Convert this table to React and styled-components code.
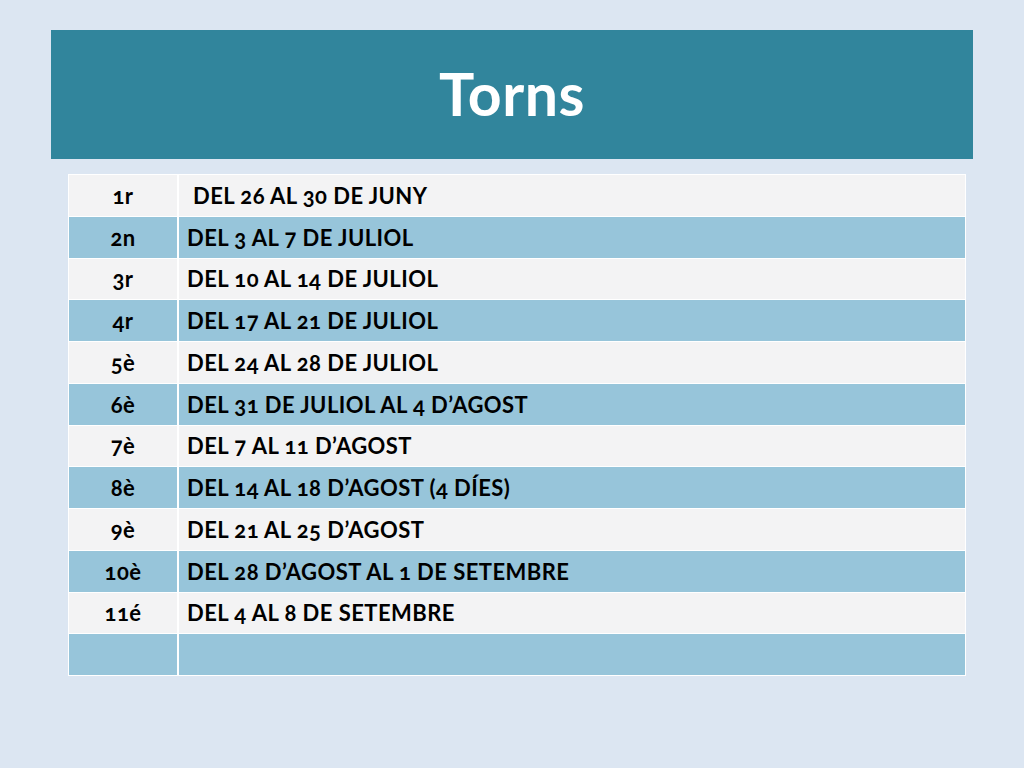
import React from 'react'
import styled, { createGlobalStyle } from 'styled-components'

const GlobalStyle = createGlobalStyle`
  html, body {
    margin: 0;
    padding: 0;
    background: #dce6f2;
  }
`

const Slide = styled.div`
  width: 1024px;
  height: 768px;
  box-sizing: border-box;
  padding: 30px 51px 0 51px;
  display: flex;
  flex-direction: column;
  font-family: Lato, "Open Sans", sans-serif;
`

const Header = styled.header`
  height: 129px;
  background: #31859c;
  display: flex;
  align-items: center;
  justify-content: center;
`

const Title = styled.h1`
  margin: 0;
  padding-bottom: 2px;
  color: #ffffff;
  font-size: 59px;
  font-weight: 700;
  letter-spacing: 0.5px;
`

const Table = styled.div`
  margin: 15px 7px 0 17px;
  display: grid;
  grid-template-columns: 108px 1fr;
  grid-auto-rows: 40.75px;
  border: 1px solid #ffffff;
  background: #ffffff;
  gap: 1px 2px;
`

const Cell = styled.div`
  display: flex;
  align-items: center;
  justify-content: ${p => (p.$center ? 'center' : 'flex-start')};
  padding-left: ${p => (p.$center ? '0' : p.$indent ? '14px' : '8px')};
  background: ${p => (p.$alt ? '#97c5da' : '#f3f3f4')};
  color: #000000;
  font-size: 22px;
  font-weight: 700;
  letter-spacing: 0.45px;
  font-variant-numeric: oldstyle-nums;
  font-feature-settings: "onum" 1;
`

const rows = [
  ['1r', 'DEL 26 AL 30 DE JUNY', true],
  ['2n', 'DEL 3 AL 7 DE JULIOL'],
  ['3r', 'DEL 10 AL 14 DE JULIOL'],
  ['4r', 'DEL 17 AL 21 DE JULIOL'],
  ['5è', 'DEL 24 AL 28 DE JULIOL'],
  ['6è', 'DEL 31 DE JULIOL AL 4 D\u2019AGOST'],
  ['7è', 'DEL 7 AL 11 D\u2019AGOST'],
  ['8è', 'DEL 14 AL 18 D\u2019AGOST (4 DÍES)'],
  ['9è', 'DEL 21 AL 25 D\u2019AGOST'],
  ['10è', 'DEL 28 D\u2019AGOST AL 1 DE SETEMBRE'],
  ['11é', 'DEL 4 AL 8 DE SETEMBRE'],
  ['', ''],
]

const App = () => (
  <>
    <GlobalStyle />
    <Slide>
      <Header>
        <Title>Torns</Title>
      </Header>
      <Table>
        {rows.map(([num, dates, indent], i) => (
          <React.Fragment key={i}>
            <Cell $center $alt={i % 2 === 1}>{num}</Cell>
            <Cell $alt={i % 2 === 1} $indent={indent}>{dates}</Cell>
          </React.Fragment>
        ))}
      </Table>
    </Slide>
  </>
)

export default App
